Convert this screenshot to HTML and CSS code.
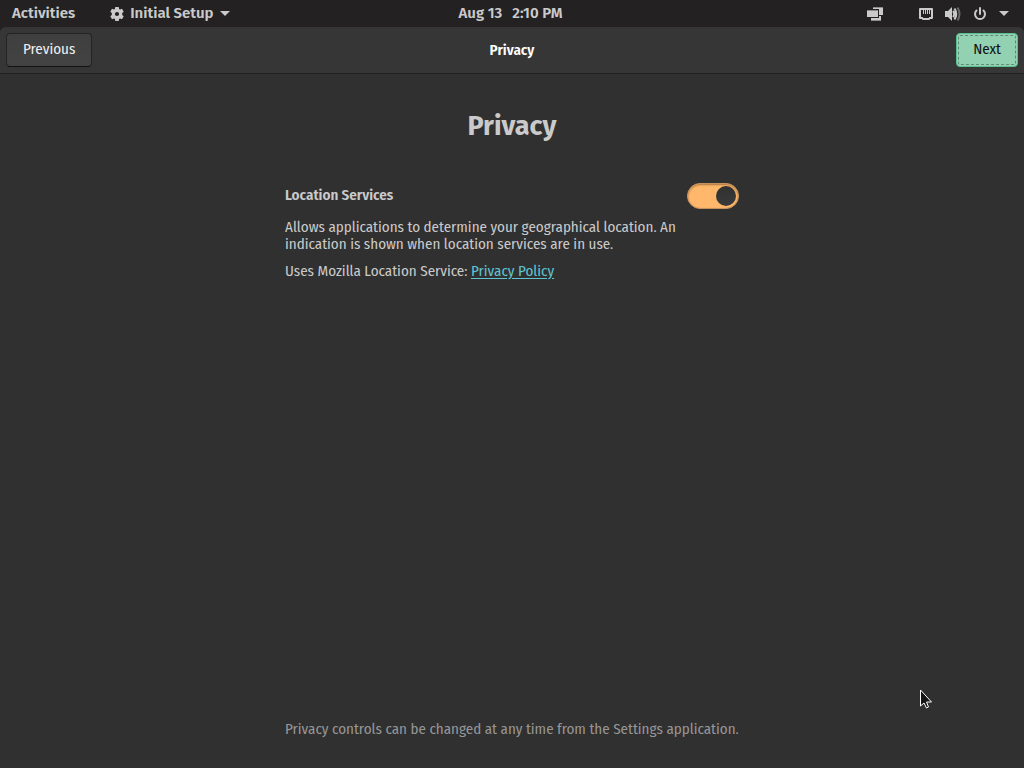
FILE: index.html
```html
<!DOCTYPE html>
<html lang="en">
<head>
<meta charset="utf-8">
<meta name="viewport" content="width=device-width, initial-scale=1">
<title>Initial Setup</title>
<link rel="stylesheet" href="styles.css">
</head>
<body>
<div class="topbar">
  <div class="topbar-left">
    <button class="panel-button" type="button">Activities</button>
    <button class="panel-button" type="button">
      <svg width="14" height="14" viewBox="0 0 14 14" aria-hidden="true">
        <path fill="currentColor" fill-rule="evenodd" d="M5.300 0h3.400l.4 2 .9.500 2-.7 1.700 2.900L12.200 6v2l1.500 1.300-1.700 2.900-2-.7-.9.500-.4 2H5.300l-.4-2-.9-.5-2 .7L.3 9.300 1.800 8V6L.3 4.700 2 1.800l2 .7.9-.5zM7 4.900a2.100 2.100 0 1 0 0 4.200 2.100 2.100 0 0 0 0-4.200z"/>
      </svg>
      <span>Initial Setup</span>
      <svg width="10" height="5" viewBox="0 0 10 5" aria-hidden="true"><path fill="currentColor" d="M0 0h10L5 5z"/></svg>
    </button>
  </div>
  <button class="panel-button clock" type="button"><span>Aug 13</span><span>2:10 PM</span></button>
  <div class="topbar-right">
    <svg width="16" height="14" viewBox="0 0 16 14" aria-hidden="true">
      <path fill="#cacaca" d="M6 1h10v7H6z"/><path fill="#8b8b8b" d="M6 0h10v1H6z"/>
      <path fill="#cacaca" d="M4 9h10v4H4z"/><path fill="#8b8b8b" d="M4 13h10v1H4z"/>
      <path fill="#232122" d="M0 2h12v9H0z"/>
      <path fill="#cacaca" d="M0 3h11v7H0z"/><path fill="#8b8b8b" d="M0 3h11v1H0z"/>
    </svg>
    <button class="panel-button status" type="button" aria-label="System menu">
      <svg width="14" height="12" viewBox="0 0 14 12" aria-hidden="true">
        <path fill="currentColor" fill-rule="evenodd" d="M1 0h12q1 0 1 1v9q0 1-1 1h-2q0 1-1 1H4q-1 0-1-1H1q-1 0-1-1V1q0-1 1-1zM2 2v7h2v1h6V9h2V2z"/>
        <path fill="currentColor" d="M4 2h1v4H4zM6 2h1v4H6zM8 2h1v4H8zM10 2h1v4h-1z"/>
      </svg>
      <svg width="16" height="16" viewBox="0 0 16 16" aria-hidden="true">
        <path fill="currentColor" d="M0 5h3l4-4v14l-4-4H0z"/>
        <path fill="none" stroke="currentColor" stroke-width="2" d="M8 5q2.500 3 0 6M9.500 2.500q3.500 5.500 0 11"/>
        <path fill="none" stroke="#686868" stroke-width="2" d="M12.500 1.500q4 6.500 0 13"/>
      </svg>
      <svg width="14" height="14" viewBox="0 0 14 14" aria-hidden="true">
        <path fill="none" stroke="currentColor" stroke-width="2" stroke-linecap="round" d="M3.500 3.500a5 5 0 1 0 7 0M7 1v6"/>
      </svg>
      <svg width="10" height="5" viewBox="0 0 10 5" aria-hidden="true"><path fill="currentColor" d="M0 0h10L5 5z"/></svg>
    </button>
  </div>
</div>
<div class="window">
  <header class="headerbar">
    <div><button class="button" type="button">Previous</button></div>
    <div class="window-title">Privacy</div>
    <div class="header-end"><button class="button suggested" type="button">Next</button></div>
  </header>
  <main class="page">
    <h1 class="heading">Privacy</h1>
    <div class="setting">
      <label class="setting-label" for="location">Location Services</label>
      <input class="switch" id="location" type="checkbox" role="switch" checked>
    </div>
    <p class="text">Allows applications to determine your geographical location. An indication is shown when location services are in use.</p>
    <p class="text">Uses Mozilla Location Service: <a class="link" href="#">Privacy Policy</a></p>
    <p class="footnote">Privacy controls can be changed at any time from the Settings application.</p>
  </main>
</div>
<svg class="pointer" width="12" height="20" viewBox="0 0 12 20" aria-hidden="true">
  <path fill="#151515" stroke="#fff" d="M.5 1v16l3.500-3 2.500 5 2-1-2-5h5z"/>
</svg>
</body>
</html>
```

FILE: styles.css
```css
* { box-sizing: border-box; }

body {
  margin: 0;
  min-height: 100vh;
  display: flex;
  flex-direction: column;
  background: #232122;
  color: #cacaca;
  font: 15px/17px "Fira Sans Condensed", "Noto Sans", sans-serif;
}

button { font: inherit; }

.topbar {
  display: grid;
  grid-template-columns: 1fr auto 1fr;
  align-items: center;
  height: 27px;
  padding: 0 15px 0 12px;
  font-family: "Fira Sans", "Noto Sans", sans-serif;
  font-weight: 600;
}

.topbar-left,
.topbar-right,
.panel-button {
  display: flex;
  align-items: center;
}

.topbar-left { gap: 35px; }
.topbar-right { justify-content: flex-end; gap: 36px; }

.panel-button {
  gap: 6px;
  padding: 0;
  border: 0;
  background: none;
  color: inherit;
  white-space: nowrap;
}

.clock { gap: 10px; }
.status { gap: 12px; }

.window {
  flex: 1;
  display: flex;
  flex-direction: column;
  border-radius: 6px 6px 0 0;
  background: #303030;
  overflow: hidden;
}

.headerbar {
  display: grid;
  grid-template-columns: 1fr auto 1fr;
  align-items: center;
  padding: 6px;
  border-bottom: 1px solid #202020;
  background: #363636;
}

.header-end { text-align: right; }

.window-title {
  color: #fff;
  font-weight: 600;
}

.button {
  height: 34px;
  padding: 0 16px 2px;
  border: 1px solid #242424;
  border-bottom-color: #111;
  border-radius: 4px;
  background: linear-gradient(#3f3f3f, #434343);
  color: #eee;
}

.suggested {
  border-color: #57c08e;
  background: #92d2b3;
  color: #111;
  outline: 1px dashed #5f8b76;
  outline-offset: -3px;
}

.page {
  flex: 1;
  display: flex;
  flex-direction: column;
  width: 454px;
  max-width: 100%;
  margin: 0 auto;
  padding: 34px 0 30px;
}

.heading {
  margin: 0 0 39px;
  font-family: "Fira Sans", "Noto Sans", sans-serif;
  font-size: 27px;
  line-height: 36px;
  text-align: center;
}

.setting {
  display: flex;
  align-items: flex-start;
  justify-content: space-between;
  margin-bottom: 10px;
}

.setting-label {
  font-weight: 600;
  line-height: 24px;
}

.switch {
  appearance: none;
  display: flex;
  justify-content: flex-end;
  width: 52px;
  height: 26px;
  margin: 0;
  padding: 2px;
  border: 1px solid #c6935e;
  border-radius: 13px;
  background: #ffb76b;
  box-shadow: inset 0 1px 2px #a8733d;
}

.switch::before {
  content: "";
  width: 20px;
  height: 20px;
  border-radius: 50%;
  background: linear-gradient(#303030, #3a3a3a);
}

.switch:not(:checked) {
  justify-content: flex-start;
  background: #555;
}

.text {
  max-width: 400px;
  margin: 0 0 10px;
}

.link {
  color: #5fc3d0;
  text-underline-offset: 2px;
}

.footnote {
  margin: auto 0 0;
  color: #969696;
}

.pointer {
  position: absolute;
  left: 920px;
  top: 689px;
}
```
